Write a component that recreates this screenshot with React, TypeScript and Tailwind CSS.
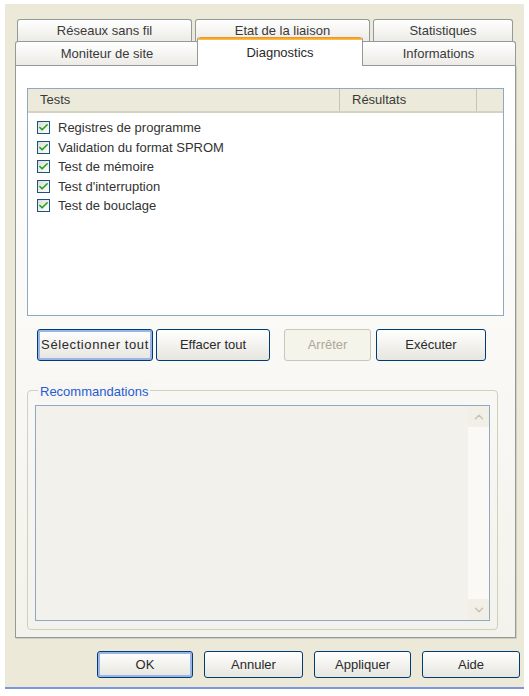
import { Check, ChevronUp, ChevronDown } from "lucide-react";

type Tab = { label: string; width: string };

const backRow: Tab[] = [
  { label: "Réseaux sans fil", width: "w-[175px]" },
  { label: "Etat de la liaison", width: "w-[175px]" },
  { label: "Statistiques", width: "w-[140px]" },
];

const tests = [
  "Registres de programme",
  "Validation du format SPROM",
  "Test de mémoire",
  "Test d'interruption",
  "Test de bouclage",
];

const TabButton = ({ label, width }: Tab) => (
  <div
    className={`${width} h-full flex items-center justify-center rounded-t-[3px] border border-b-0 border-[#919B9C] bg-gradient-to-b from-white to-[#ECEBE6] text-[#3a3a3a]`}
  >
    {label}
  </div>
);

const CheckBox = () => (
  <div className="w-[13px] h-[13px] border border-[#1C5180] bg-gradient-to-br from-[#DCDCD7] to-white flex items-center justify-center">
    <Check size={11} strokeWidth={3.5} className="text-[#21A121]" />
  </div>
);

const Button = ({
  label,
  width,
  tall,
  ring,
  disabled,
  wide,
}: {
  label: string;
  width: string;
  tall?: boolean;
  ring?: boolean;
  disabled?: boolean;
  wide?: boolean;
}) => (
  <div
    className={`${width} ${tall ? "h-[32px]" : "h-[27px]"} flex items-center justify-center rounded-[3px] border ${
      disabled
        ? "border-[#C9C7BA] bg-[#F5F4EA] text-[#ACA899]"
        : "border-[#003C74] bg-gradient-to-b from-white to-[#E6E5DE] text-[#2a2a2a]"
    } ${ring ? "shadow-[inset_0_0_0_2px_#98B4E8]" : ""} ${wide ? "tracking-[0.6px]" : ""}`}
  >
    {label}
  </div>
);

export default function App() {
  return (
    <div className="w-[529px] h-[696px] bg-white font-['Liberation_Sans',Arial,sans-serif] text-[13px] text-[#333]">
      <div className="ml-[5px] mt-[4px] w-[519px] h-[685px] bg-[#ECE9D8] border-b-2 border-[#7A96DF] flex flex-col">
        {/* tab strip */}
        <div className="ml-[10px] mt-[15px] w-[501px] flex flex-col">
          <div className="h-[22px] flex gap-[3px] ml-[2px]">
            {backRow.map((t) => (
              <TabButton key={t.label} {...t} />
            ))}
          </div>
          <div className="h-[24px] flex">
            <TabButton label="Moniteur de site" width="w-[184px]" />
            <div className="relative z-10 -mt-[4px] -mx-[2px] mb-[-1px] w-[166px] h-[29px] flex flex-col rounded-t-[3px] border border-b-0 border-[#919B9C] border-t-0 bg-white">
              <div className="h-[3px] rounded-t-[3px] bg-gradient-to-b from-[#E68B2C] to-[#FFC73C]" />
              <div className="flex-1 flex items-center justify-center text-[#2a2a2a]">Diagnostics</div>
            </div>
            <TabButton label="Informations" width="w-[155px]" />
          </div>

          {/* panel */}
          <div className="h-[573px] border border-[#919B9C] bg-gradient-to-b from-white to-[#F3F2EC] shadow-[1px_1px_0_#D0CEBF] flex flex-col px-[11px] pt-[22px]">
            <div className="h-[228px] border border-[#8FA9C4] bg-white flex flex-col">
              <div className="h-[24px] flex bg-[#EBEADB] border-b-2 border-[#D6D2C2] text-[#3a3a3a]">
                <div className="w-[312px] pl-[12px] flex items-center border-r border-[#C7C5B2]">Tests</div>
                <div className="w-[137px] pl-[12px] flex items-center border-r border-[#C7C5B2]">Résultats</div>
              </div>
              <div className="flex flex-col pt-[5px] pl-[9px]">
                {tests.map((t) => (
                  <div key={t} className="h-[19.5px] flex items-center gap-[8px] text-[#333]">
                    <CheckBox />
                    <span>{t}</span>
                  </div>
                ))}
              </div>
            </div>

            <div className="mt-[13px] flex ml-[10px]">
              <Button label="Sélectionner tout" width="w-[116px]" tall ring wide />
              <div className="w-[3px]" />
              <Button label="Effacer tout" width="w-[114px]" tall />
              <div className="w-[14px]" />
              <Button label="Arrêter" width="w-[87px]" tall disabled />
              <div className="w-[5px]" />
              <Button label="Exécuter" width="w-[110px]" tall />
            </div>

            {/* recommendations group */}
            <div className="relative mt-[29px] w-[471px] h-[240px] rounded-[4px] border border-[#D0D0BF] px-[7px] pt-[14px] pb-[8px]">
              <span className="absolute left-[10px] -top-[9px] px-[2px] bg-[#F7F6F2] text-[#1F5CD6]">
                Recommandations
              </span>
              <div className="h-full border border-[#8FA9C4] bg-[#F3F1EB] flex justify-end">
                <div className="w-[21px] flex flex-col justify-between bg-[#FAF9F6]">
                  <div className="h-[21px] flex items-center justify-center bg-[#F1EFE6] rounded-[2px]">
                    <ChevronUp size={14} strokeWidth={2.5} className="text-[#C6C4B8]" />
                  </div>
                  <div className="h-[21px] flex items-center justify-center bg-[#F1EFE6] rounded-[2px]">
                    <ChevronDown size={14} strokeWidth={2.5} className="text-[#C6C4B8]" />
                  </div>
                </div>
              </div>
            </div>
          </div>
        </div>

        {/* dialog buttons */}
        <div className="mt-[13px] flex ml-[92px] gap-[11px]">
          <Button label="OK" width="w-[96px]" ring />
          <Button label="Annuler" width="w-[99px]" />
          <Button label="Appliquer" width="w-[97px]" />
          <Button label="Aide" width="w-[98px]" />
        </div>
      </div>
    </div>
  );
}
